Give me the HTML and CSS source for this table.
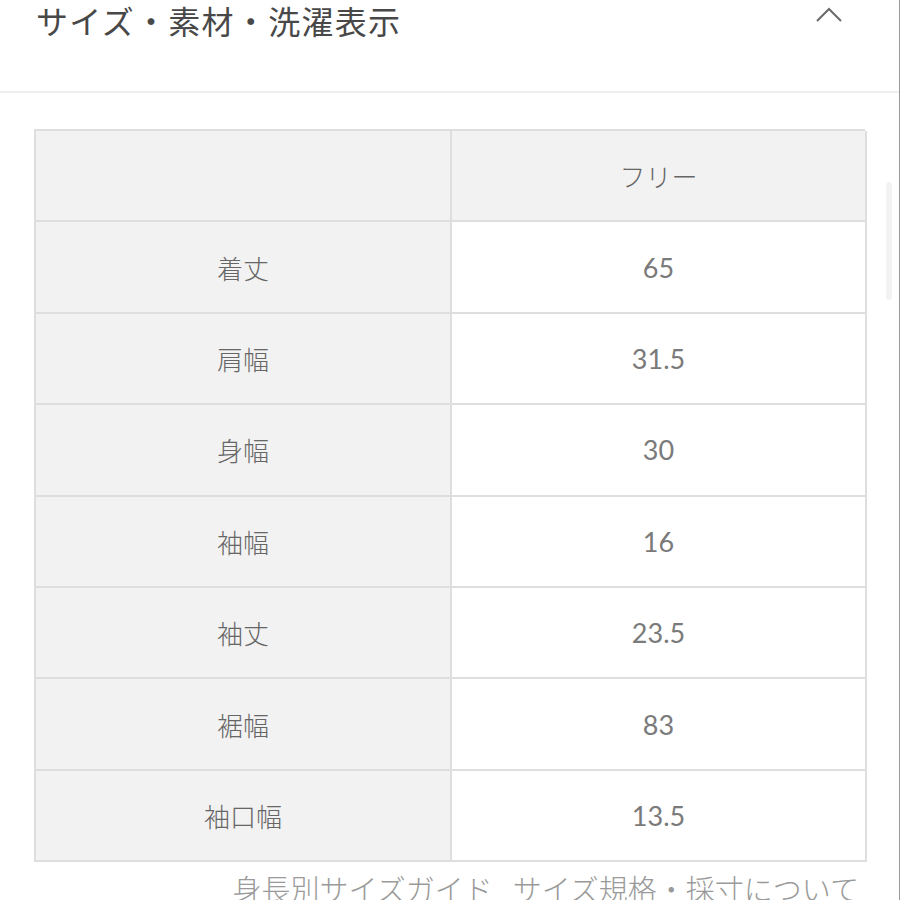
FILE: index.html
```html
<!DOCTYPE html>
<html lang="ja">
<head>
<meta charset="utf-8">
<link rel="stylesheet" href="styles.css">
</head>
<body>
<div class="page">
  <header class="head">
    <h2 class="title">サイズ・素材・洗濯表示</h2>
    <svg class="chev" width="30" height="18" viewBox="0 0 30 18"><polyline points="2,15 14,3 26,15" fill="none" stroke="#6a6a6a" stroke-width="2"/></svg>
  </header>
  <section class="body">
    <div class="table">
      <div class="cell th"></div><div class="cell th">フリー</div>
      <div class="cell lab">着丈</div><div class="cell val">65</div>
      <div class="cell lab">肩幅</div><div class="cell val">31.5</div>
      <div class="cell lab">身幅</div><div class="cell val">30</div>
      <div class="cell lab">袖幅</div><div class="cell val">16</div>
      <div class="cell lab">袖丈</div><div class="cell val">23.5</div>
      <div class="cell lab">裾幅</div><div class="cell val">83</div>
      <div class="cell lab">袖口幅</div><div class="cell val">13.5</div>
    </div>
    <div class="links"><span>身長別サイズガイド</span><span>サイズ規格・採寸について</span></div>
  </section>
  <div class="scroll"></div>
</div>
</body>
</html>
```
FILE: styles.css
```css
html, body { margin: 0; padding: 0; background: #fff; }
body { font-family: Lato, "Noto Sans CJK JP", sans-serif; color: #666; overflow: hidden; }
.page { position: relative; width: 899px; height: 900px; border-right: 1px solid #9a9a9a; overflow: hidden; }
.head { height: 93px; border-bottom: 2px solid #eeeeee; display: flex; justify-content: space-between; align-items: flex-start; padding: 0 54px 0 36px; box-sizing: border-box; }
.title { margin: 0; font-weight: 400; font-size: 32px; line-height: 40px; letter-spacing: 1.3px; color: #484848; font-family: "Noto Sans CJK JP", sans-serif; }
.chev { margin-top: 6px; }
.body { padding: 36px 34px 0 34px; }
.table { display: grid; grid-template-columns: 416px 415px; grid-auto-rows: 91.4px; border-top: 2px solid #dedede; border-left: 2px solid #dedede; width: 831px; box-sizing: border-box; }
.cell { display: flex; align-items: center; justify-content: center; border-right: 2px solid #dedede; border-bottom: 2px solid #dedede; font-size: 26px; color: #666; }
.th, .lab { background: #f2f2f2; font-family: "Noto Sans CJK JP", sans-serif; font-weight: 300; }
.val { font-size: 27px; background: #fff; color: #7a7a7a; font-weight: 400; }
.links { display: flex; justify-content: flex-end; gap: 20px; padding-right: 6px; margin-top: 8px; font-family: "Noto Sans CJK JP", sans-serif; font-weight: 300; font-size: 29px; line-height: 36px; color: #9a9a9a; }
.scroll { position: absolute; left: 886px; top: 182px; width: 6px; height: 118px; background: #f3f3f3; border-radius: 3px; }
```
